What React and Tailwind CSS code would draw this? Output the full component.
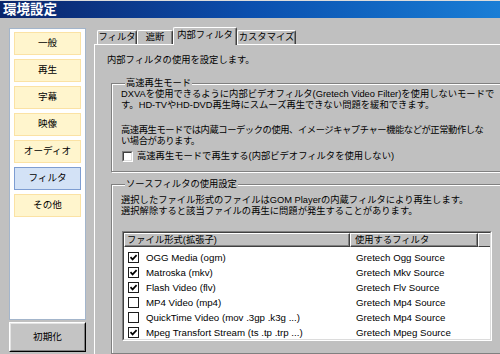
import React from 'react';

const menu = ['一般', '再生', '字幕', '映像', 'オーディオ', 'フィルタ', 'その他'];

const tabs = [
  { label: 'フィルタ', w: 'w-[40px]' },
  { label: '遮断', w: 'w-[36px]' },
  { label: '内部フィルタ', w: 'w-[64px]', active: true },
  { label: 'カスタマイズ', w: 'w-[59px]' },
];

const rows = [
  { on: true, name: 'OGG Media (ogm)', filter: 'Gretech Ogg Source' },
  { on: true, name: 'Matroska (mkv)', filter: 'Gretech Mkv Source' },
  { on: true, name: 'Flash Video (flv)', filter: 'Gretech Flv Source' },
  { on: false, name: 'MP4 Video (mp4)', filter: 'Gretech Mp4 Source' },
  { on: false, name: 'QuickTime Video (mov .3gp .k3g ...)', filter: 'Gretech Mp4 Source' },
  { on: true, name: 'Mpeg Transfort Stream (ts .tp .trp ...)', filter: 'Gretech Mpeg Source' },
];

function ListCheck({ on }) {
  return (
    <svg width="11" height="11" viewBox="0 0 11 11" className="shrink-0">
      <rect x="0.5" y="0.5" width="10" height="10" fill="#fff" stroke="#1c1c1c" />
      {on && <path d="M2.5 5.2 L4.6 7.4 L8.6 3.2" fill="none" stroke="#000" strokeWidth="1.7" />}
    </svg>
  );
}

function SunkenCheck() {
  return (
    <div className="w-[11px] h-[11px] shrink-0 border border-t-[#808080] border-l-[#808080] border-b-white border-r-white">
      <div className="w-full h-full bg-white border border-t-[#404040] border-l-[#404040] border-b-[#dcdcdc] border-r-[#dcdcdc]" />
    </div>
  );
}

export default function App() {
  return (
    <div className="w-[500px] h-[354px] overflow-hidden bg-[#c0c0c0] text-black flex flex-col font-['Liberation_Sans','Noto_Sans_CJK_JP',sans-serif]">
      <div className="h-px shrink-0 bg-[#dcdcdc]" />
      {/* title bar */}
      <div className="h-[17px] shrink-0 bg-linear-to-r from-[#0a246a] via-[#0b4fae] to-[#1a7ed6] flex items-center pl-[3px] text-white font-bold text-[13.5px] leading-none">
        環境設定
      </div>

      <div className="flex pt-[9px] shrink-0">
        {/* sidebar */}
        <div className="w-[77px] ml-[9px] pt-px flex flex-col shrink-0">
          <div className="h-[292px] bg-white border border-[#a3b5cb] px-[4px] pt-[3px] flex flex-col gap-[4px]">
            {menu.map((m) => (
              <div
                key={m}
                className={
                  m === 'フィルタ'
                    ? 'h-[23px] flex items-center justify-center text-[9.6px] bg-[#d3e2f6] border border-[#7d9dd2]'
                    : 'h-[23px] flex items-center justify-center text-[9.6px] bg-[#fff5cd] border border-[#fbe2a4]'
                }
              >
                {m}
              </div>
            ))}
          </div>
          <div className="mt-[2px] h-[30px] border border-t-white border-l-white border-b-black border-r-black">
            <div className="h-full flex items-center justify-center text-[9.6px] bg-[#c4c4c4] border border-t-[#e4e4e4] border-l-[#e4e4e4] border-b-[#808080] border-r-[#808080]">
              初期化
            </div>
          </div>
        </div>

        {/* tab control */}
        <div className="ml-[8px] w-[420px] shrink-0 flex flex-col">
          <div className="h-[17px] shrink-0 flex items-end pl-[3px]">
            {tabs.map((t) =>
              t.active ? (
                <div
                  key={t.label}
                  className={`${t.w} relative z-10 -mb-px h-[18px] bg-[#c0c0c0] rounded-t-[2px] border-t border-l border-r border-t-white border-l-white border-r-[#404040] shadow-[inset_-1px_0_0_#808080] flex justify-center pt-[2px] text-[9.3px] leading-[11px]`}
                >
                  {t.label}
                </div>
              ) : (
                <div
                  key={t.label}
                  className={`${t.w} h-[14px] bg-[#c0c0c0] rounded-t-[2px] border-t border-l border-r border-t-white border-l-white border-r-[#404040] shadow-[inset_-1px_0_0_#808080] flex justify-center pt-[1px] text-[9.3px] leading-[11px]`}
                >
                  {t.label}
                </div>
              )
            )}
          </div>

          <div className="h-[310px] shrink-0 border-t border-l border-white flex flex-col">
            <div className="pl-[12px] pt-[10px] text-[9.3px] leading-[11px] whitespace-nowrap">
              内部フィルタの使用を設定します。
            </div>

            {/* group 1 */}
            <fieldset className="ml-[16px] mt-[12px] w-[400px] border border-[#808080] shadow-[inset_1px_1px_0_#fff,1px_1px_0_#fff] pl-[9px] pb-[9px] text-[9.3px] leading-[11px]">
              <legend className="ml-[4px] px-[1px] bg-[#c0c0c0] whitespace-nowrap">高速再生モード</legend>
              <div className="whitespace-nowrap">DXVAを使用できるように内部ビデオフィルタ(Gretech Video Filter)を使用しないモードで</div>
              <div className="whitespace-nowrap">す。HD-TVやHD-DVD再生時にスムーズ再生できない問題を緩和できます。</div>
              <div className="mt-[14px] whitespace-nowrap tracking-[-0.45px]">高速再生モードでは内蔵コーデックの使用、イメージキャプチャー機能などが正常動作しな</div>
              <div className="whitespace-nowrap tracking-[-0.45px]">い場合があります。</div>
              <div className="mt-[4px] ml-px flex items-center gap-[4px] whitespace-nowrap">
                <SunkenCheck />
                <span>高速再生モードで再生する(内部ビデオフィルタを使用しない)</span>
              </div>
            </fieldset>

            {/* group 2 */}
            <fieldset className="ml-[16px] mt-[7px] w-[400px] h-[180px] border border-[#808080] shadow-[inset_1px_1px_0_#fff,1px_1px_0_#fff] pl-[9px] pt-[5px] text-[9.3px] leading-[11px]">
              <legend className="ml-[4px] px-[1px] bg-[#c0c0c0] whitespace-nowrap">ソースフィルタの使用設定</legend>
              <div className="whitespace-nowrap">選択したファイル形式のファイルはGOM Playerの内蔵フィルタにより再生します。</div>
              <div className="whitespace-nowrap">選択解除すると該当ファイルの再生に問題が発生することがあります。</div>

              <div className="mt-[14px] ml-px w-[370px] h-[110px] border border-t-[#808080] border-l-[#808080] border-b-white border-r-white">
                <div className="h-full bg-white border border-t-[#404040] border-l-[#404040] border-b-[#dcdcdc] border-r-[#dcdcdc] flex flex-col overflow-hidden">
                  <div className="h-[14px] flex shrink-0">
                    <div className="w-[226px] bg-[#c0c0c0] border border-t-white border-l-white border-b-[#404040] border-r-[#404040] shadow-[inset_-1px_-1px_0_#808080] pl-[2px] leading-[12px] whitespace-nowrap">
                      ファイル形式(拡張子)
                    </div>
                    <div className="w-[128px] bg-[#c0c0c0] border border-t-white border-l-white border-b-[#404040] border-r-[#404040] shadow-[inset_-1px_-1px_0_#808080] pl-[4px] leading-[12px] whitespace-nowrap">
                      使用するフィルタ
                    </div>
                    <div className="flex-1 bg-[#c0c0c0] border-t border-l border-b border-t-white border-l-white border-b-[#404040]" />
                  </div>
                  <div className="pt-[3px] text-[9.7px]">
                    {rows.map((r) => (
                      <div key={r.name} className="h-[15px] flex items-center whitespace-nowrap">
                        <div className="w-[226px] flex items-center pl-[4px]">
                          <ListCheck on={r.on} />
                          <span className="ml-[7px]">{r.name}</span>
                        </div>
                        <div className="w-[128px] pl-[6px]">{r.filter}</div>
                      </div>
                    ))}
                  </div>
                </div>
              </div>
            </fieldset>
          </div>
        </div>
      </div>
    </div>
  );
}
